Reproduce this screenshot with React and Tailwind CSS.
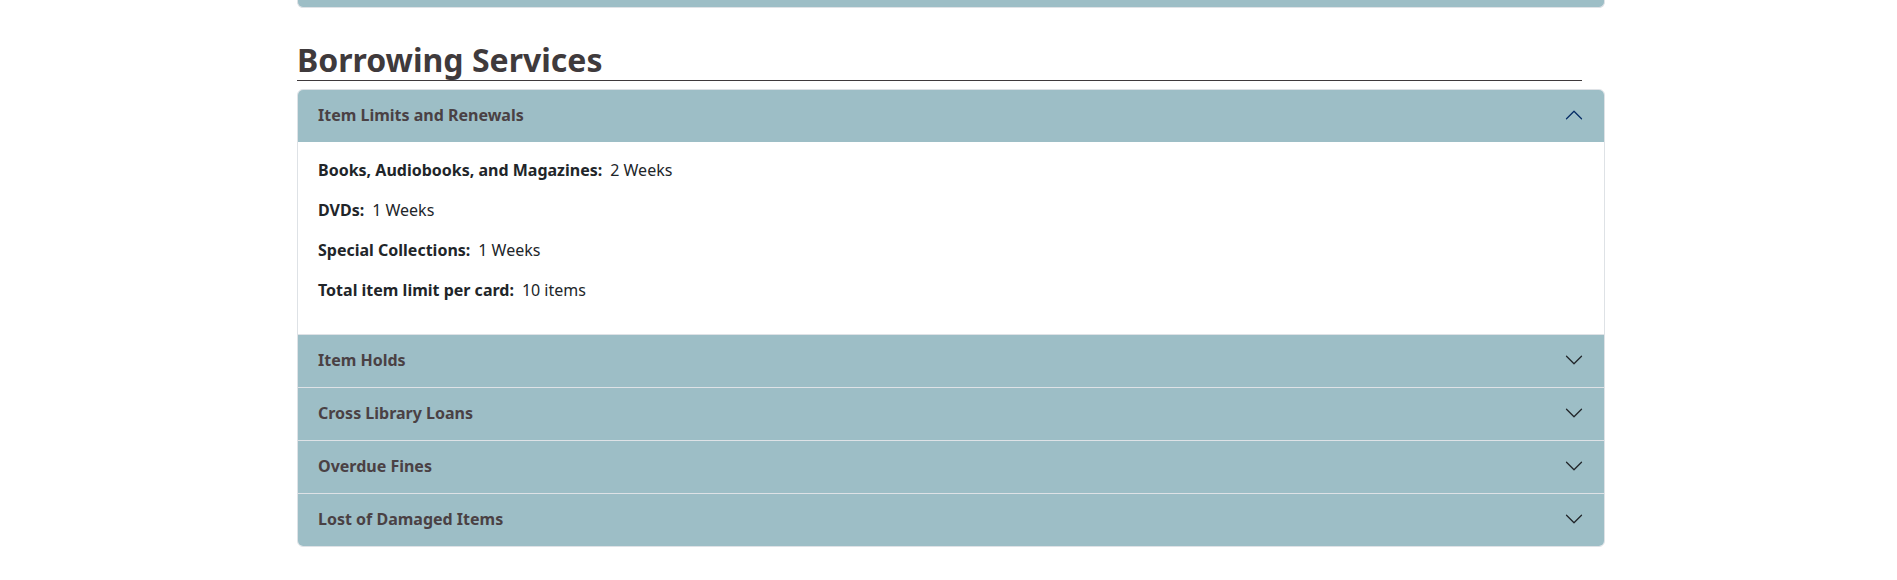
import React from "react";

const Chevron = ({ up }) => (
  <svg
    viewBox="0 0 16 16"
    fill="none"
    stroke={up ? "#052c65" : "#212529"}
    strokeLinecap="round"
    strokeLinejoin="round"
    className={"w-5 h-5 shrink-0 " + (up ? "rotate-180" : "")}
  >
    <path d="M2 5L8 11L14 5" />
  </svg>
);

const Header = ({ title, up }) => (
  <button className="w-full flex items-center justify-between px-5 pt-[13px] pb-[15px] bg-[#9dbec6] text-left text-[16px] leading-6 font-bold text-[#4a4144]">
    <span>{title}</span>
    <Chevron up={up} />
  </button>
);

const rows = [
  ["Books, Audiobooks, and Magazines:", "2 Weeks"],
  ["DVDs:", "1 Weeks"],
  ["Special Collections:", "1 Weeks"],
  ["Total item limit per card:", "10 items"],
];

export default function App() {
  return (
    <div className="min-h-[580px] bg-white font-['Noto_Sans',sans-serif]">
      <div className="ml-[297px] w-[1308px]">
        <div className="h-[8px] bg-[#9dbec6] border border-t-0 border-[#dee2e6] rounded-b-[6px]" />
        <h2 className="mt-[31px] w-[1285px] border-b border-[#3f3a3c] text-[32px] leading-[41px] font-bold text-[#3f3a3c]">
          Borrowing Services
        </h2>
        <div className="mt-[8px] border border-[#dee2e6] rounded-[6px] overflow-hidden">
          <Header title="Item Limits and Renewals" up />
          <div className="px-5 py-4 bg-white text-[16px] leading-6 text-[#212529]">
            {rows.map(([k, v]) => (
              <p key={k} className="mb-4">
                <span className="font-bold">{k}</span>
                <span className="ml-2">{v}</span>
              </p>
            ))}
          </div>
          {["Item Holds", "Cross Library Loans", "Overdue Fines", "Lost of Damaged Items"].map((t) => (
            <div key={t} className="border-t border-[#dee2e6]">
              <Header title={t} />
            </div>
          ))}
        </div>
      </div>
    </div>
  );
}
